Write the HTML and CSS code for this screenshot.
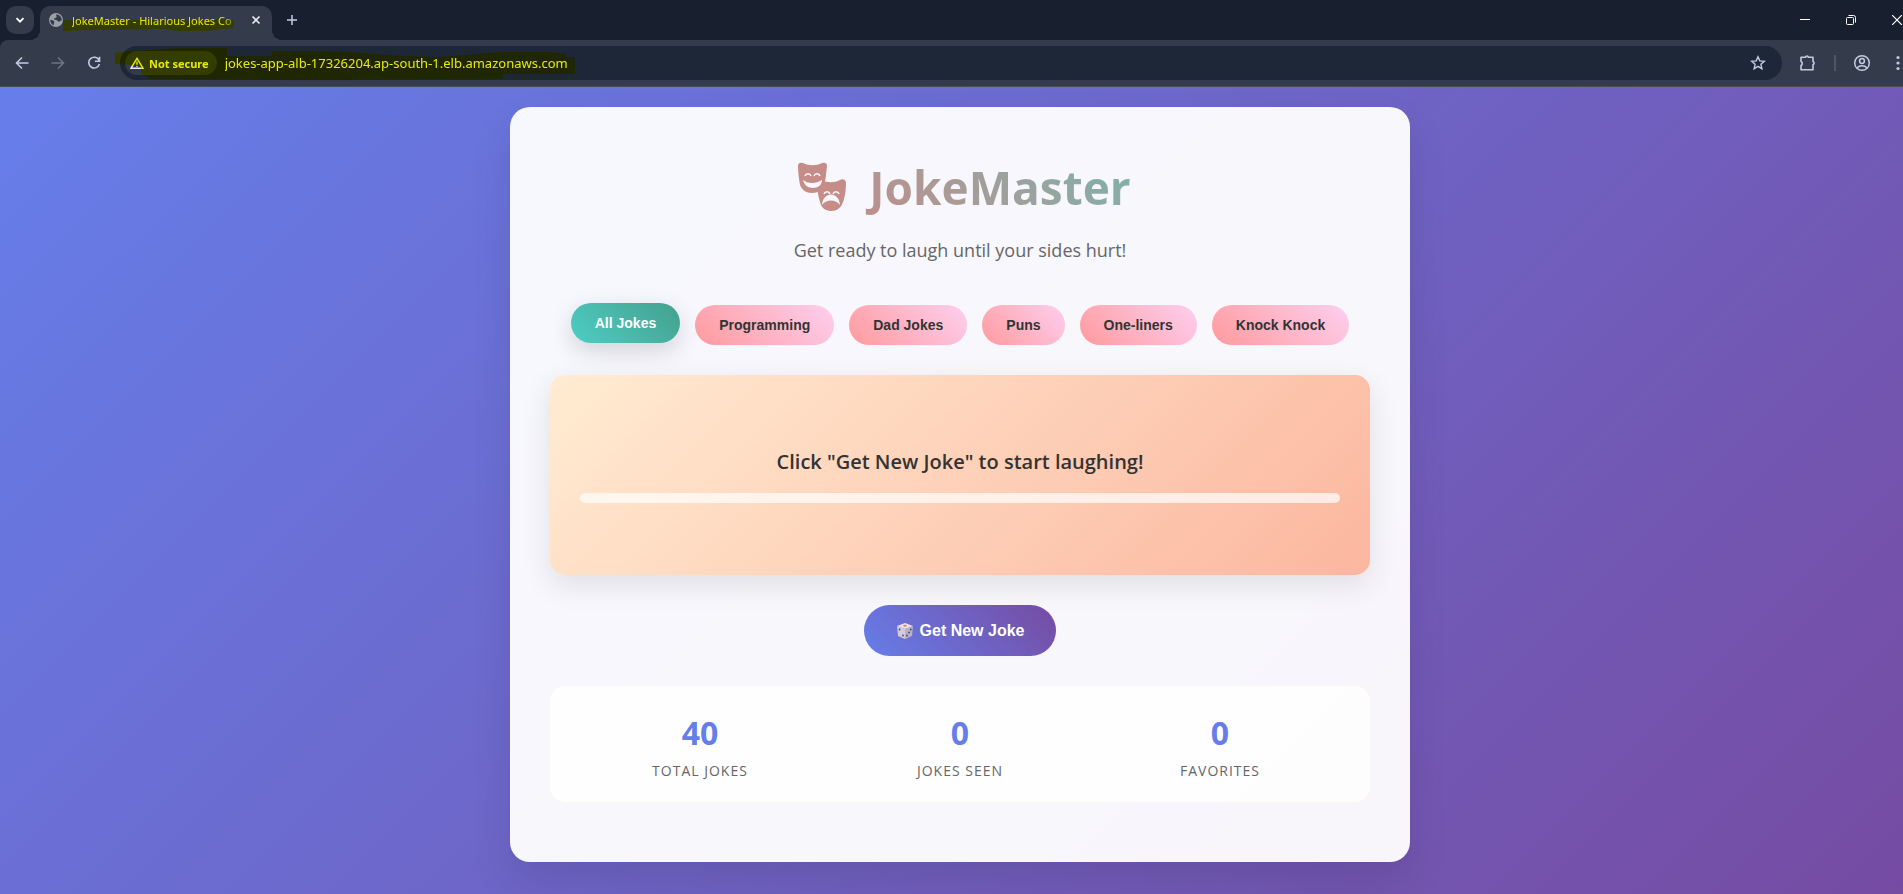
FILE: index.html
```html
<!DOCTYPE html>
<html lang="en">
<head>
<meta charset="utf-8">
<title>JokeMaster - Hilarious Jokes Collection</title>
<link rel="stylesheet" href="styles.css">
</head>
<body>
<div class="window">
  <header class="chrome">
    <div class="tabstrip">
      <button class="tab-search" aria-label="Search tabs"><svg width="12" height="12" viewBox="0 0 12 12"><path d="M2.500 4.200 6 7.700l3.500-3.500" fill="none" stroke="currentColor" stroke-width="1.800"/></svg></button>
      <div class="tab">
        <svg class="globe" width="14" height="14" viewBox="0 0 14 14"><circle cx="7" cy="7" r="7" fill="#9aa0a6"/><path d="M7.500 1.200c-1 1.300.5 1.500 0 2.800-.6 1.200-2.200.8-2.400 2-.2 1 1.300 1 2.600 1.300 1.200.3 1 1.700 2.300 1.500 1-.2 1.200-1.300 2.700-1.300A5.800 5.800 0 0 0 7.500 1.200zM1.200 7c1.500 0 3.800.3 4.100 1.800.2 1.200-.8 1.500-.5 3.500A5.800 5.800 0 0 1 1.200 7z" fill="#333b4b"/></svg>
        <span class="tab-title">JokeMaster - Hilarious Jokes Co</span>
        <button class="icon-btn tab-close" aria-label="Close tab"><svg width="10" height="10" viewBox="0 0 10 10"><path d="m1.500 1.500 7 7m0-7-7 7" stroke="currentColor" stroke-width="1.600"/></svg></button>
      </div>
      <button class="icon-btn new-tab" aria-label="New tab"><svg width="12" height="12" viewBox="0 0 12 12"><path d="M6 1v10M1 6h10" stroke="currentColor" stroke-width="1.500"/></svg></button>
      <div class="window-buttons">
        <button class="icon-btn" aria-label="Minimize"><svg width="10" height="10" viewBox="0 0 10 10"><path d="M0 4.500h10" stroke="currentColor"/></svg></button>
        <button class="icon-btn" aria-label="Restore"><svg width="10" height="10" viewBox="0 0 10 10" fill="none" stroke="currentColor"><rect x=".5" y="2.500" width="7" height="7" rx="1"/><path d="M2.500.5h5a2 2 0 0 1 2 2v5"/></svg></button>
        <button class="icon-btn" aria-label="Close"><svg width="10" height="10" viewBox="0 0 10 10"><path d="m0 0 10 10M10 0 0 10" stroke="currentColor" stroke-width="1.200"/></svg></button>
      </div>
    </div>
    <div class="toolbar">
      <button class="icon-btn" aria-label="Back"><svg width="14" height="14" viewBox="0 0 14 14"><path d="M13.500 7H1.800M7 1.500 1.500 7 7 12.500" fill="none" stroke="currentColor" stroke-width="1.600"/></svg></button>
      <button class="icon-btn dim" aria-label="Forward"><svg width="14" height="14" viewBox="0 0 14 14"><path d="M.5 7h11.700M7 1.500 12.500 7 7 12.500" fill="none" stroke="currentColor" stroke-width="1.600"/></svg></button>
      <button class="icon-btn" aria-label="Reload"><svg width="14" height="14" viewBox="0 0 14 14"><path d="M12 4.200A5.400 5.400 0 1 0 12.400 8M12.500.8v4.400H8" fill="none" stroke="currentColor" stroke-width="1.600"/></svg></button>
      <div class="omnibox">
        <button class="security"><svg width="14" height="12" viewBox="0 0 14 12"><path d="M7 1.300 13 11.300H1z" fill="none" stroke="currentColor" stroke-width="1.400"/><path d="M7 4.500v3.300M7 8.700v1.300" stroke="currentColor" stroke-width="1.400"/></svg>Not secure</button>
        <input class="url" type="text" aria-label="Address" value="jokes-app-alb-17326204.ap-south-1.elb.amazonaws.com">
        <button class="icon-btn star" aria-label="Bookmark this page"><svg width="16" height="16" viewBox="0 0 16 16"><path d="m8 1.800 1.800 4.100 4.500.4-3.400 3 1 4.400L8 11.400l-3.900 2.300 1-4.400-3.400-3 4.500-.4z" fill="none" stroke="currentColor" stroke-width="1.400"/></svg></button>
      </div>
      <button class="icon-btn" aria-label="Extensions"><svg width="18" height="18" viewBox="0 0 18 18"><path d="M2 3.200h4.500a1.600 1.600 0 0 1 3 0H14v4.300a1.700 1.700 0 0 1 0 3.200v5H2v-4.300a2.200 2.200 0 0 0 0-4z" fill="none" stroke="currentColor" stroke-width="1.600" stroke-linejoin="round"/></svg></button>
      <span class="divider"></span>
      <button class="icon-btn" aria-label="Profile"><svg width="18" height="18" viewBox="0 0 18 18" fill="none" stroke="currentColor" stroke-width="1.500"><circle cx="9" cy="9" r="7.300"/><circle cx="9" cy="7" r="2.400"/><path d="M4 14c2.600-2.900 7.400-2.900 10 0"/></svg></button>
      <button class="icon-btn menu" aria-label="Menu"><svg width="4" height="16" viewBox="0 0 4 16" fill="currentColor"><circle cx="2" cy="2.500" r="1.600"/><circle cx="2" cy="8" r="1.600"/><circle cx="2" cy="13.500" r="1.600"/></svg></button>
    </div>
    <svg class="marker" width="600" height="87" viewBox="0 0 600 87" fill="#ff0" aria-hidden="true"><path d="M63 20H234V28L206 31H178L165 29 90 30 63 31z"/><path d="M115 53 128 51 150 50 180 48H227V56H272V51L300 51H320L350 52 385 55 440 57 476 54 500 52H550L566 54V57H575V74H503V79L300 80 150 79 141 73V67L130 65 115 64z"/></svg>
  </header>

  <main class="page">
    <section class="container">
      <header class="intro">
        <h1 class="title">
          <svg class="masks" width="66" height="50" viewBox="0 0 66 50" role="img" aria-label="Theatre masks">
            <g fill="#c68c88">
              <path d="M9 4c0-3 2-4 5-3 6 3 13 3 19 0 3-1 5 0 5 3-1 8-1 13-3 19-2 5-6 8-12 8s-10-3-12-8C10 17 9 11 9 4z"/>
              <path d="M28 20c0-2 2-3 4-2 7 3 13 3 19 0 3-2 6 0 6 3 0 6-1 14-3 19-2 6-6 9-12 9s-10-4-11-9c-2-6-3-13-3-20z"/>
            </g>
            <path d="M14 18c5 4 13 4 19 0 0 5-4 8-9 8s-9-3-10-8z" fill="#f7f8fe"/>
            <path d="M33 43c1-14 17-14 18 0-4-6-14-6-18 0z" fill="#f7f8fe"/>
            <path d="M16 14c1-3 5-3 6 0m3 0c1-3 5-3 6 0M35 32c1-3 5-3 6 0m3 0c1-3 5-3 6 0" fill="none" stroke="#f7f8fe" stroke-width="1.500"/>
          </svg>
          <span>JokeMaster</span>
        </h1>
        <p class="subtitle">Get ready to laugh until your sides hurt!</p>
      </header>
      <nav class="categories">
        <button class="category active">All Jokes</button>
        <button class="category">Programming</button>
        <button class="category">Dad Jokes</button>
        <button class="category">Puns</button>
        <button class="category">One-liners</button>
        <button class="category">Knock Knock</button>
      </nav>
      <article class="joke">
        <p class="joke-text">Click "Get New Joke" to start laughing!</p>
        <div class="punchline"></div>
      </article>
      <button class="new-joke"><svg width="18" height="18" viewBox="0 0 18 18" aria-hidden="true"><path d="m9 1 8 3-8 3-8-3z" fill="#e8e3ec"/><path d="m1 4 8 3v10l-7-3z" fill="#d2ccda"/><path d="m17 4-8 3v10l7-3z" fill="#b9b2c6"/><ellipse cx="9" cy="3.800" rx="1.800" ry="1" fill="#e8707c"/><g fill="#43366b"><ellipse cx="3.500" cy="7.500" rx=".8" ry="1.100"/><ellipse cx="7" cy="13.500" rx=".8" ry="1.100"/><ellipse cx="14.800" cy="7.500" rx=".8" ry="1.100"/><ellipse cx="13" cy="10.500" rx=".8" ry="1.100"/><ellipse cx="11" cy="13.500" rx=".8" ry="1.100"/></g></svg>Get New Joke</button>
      <dl class="stats">
        <div class="stat"><dd class="stat-value">40</dd><dt class="stat-label">Total Jokes</dt></div>
        <div class="stat"><dd class="stat-value">0</dd><dt class="stat-label">Jokes Seen</dt></div>
        <div class="stat"><dd class="stat-value">0</dd><dt class="stat-label">Favorites</dt></div>
      </dl>
    </section>
  </main>
</div>
</body>
</html>
```
FILE: styles.css
```css
* { box-sizing: border-box; margin: 0; padding: 0; }
html, body { height: 100%; }
body { overflow: hidden; font-family: "Open Sans", "Noto Sans", sans-serif; color: #333; }
button, input { border: 0; background: none; font: inherit; color: inherit; }
svg { display: block; flex: none; }

/* The window reaches a little past the right edge of the screen. */
.window { display: flex; flex-direction: column; width: calc(100% + 17px); min-height: 100%; }

.chrome { position: relative; isolation: isolate; background: #18202f; color: #c3cbe0; border-bottom: 1px solid #4a4c50; font-family: "Noto Sans", sans-serif; font-size: 11px; }
.marker { position: absolute; left: 0; top: 0; mix-blend-mode: multiply; pointer-events: none; }
.icon-btn { display: grid; place-items: center; width: 28px; height: 28px; flex: none; }
.dim { color: #6c7484; }

.tabstrip { display: flex; align-items: flex-end; height: 40px; padding-left: 6px; }
.tab-search { display: grid; place-items: center; width: 28px; height: 28px; margin-bottom: 6px; border-radius: 10px; background: #343c4c; color: #fff; }
.tab { position: relative; display: flex; align-items: center; width: 232px; height: 34px; margin-left: 6px; padding: 0 2px 6px 9px; border-radius: 10px 10px 0 0; background: #343c4c; }
.tab::before, .tab::after { content: ""; position: absolute; bottom: 0; width: 10px; height: 10px; }
.tab::before { right: 100%; background: radial-gradient(circle at 0 0, transparent 10px, #343c4c 10px); }
.tab::after { left: 100%; background: radial-gradient(circle at 100% 0, transparent 10px, #343c4c 10px); }
.tab-title { flex: 1; margin-left: 9px; white-space: nowrap; color: #e6e628; -webkit-mask-image: linear-gradient(90deg, #000 88%, transparent); mask-image: linear-gradient(90deg, #000 88%, transparent); }
.tab-close { color: #e6e9f0; }
.new-tab { margin: 0 0 6px 6px; }
.window-buttons { display: flex; gap: 18px; margin: 0 9px 6px auto; color: #fff; }

.toolbar { display: flex; align-items: center; gap: 8px; height: 46px; padding: 0 8px; border-top-left-radius: 8px; background: #343c4c; }
.omnibox { display: flex; align-items: center; flex: 1; height: 34px; margin: 0 4px; padding: 0 10px 0 5px; border-radius: 17px; background: #1e2737; }
.security { display: flex; align-items: center; gap: 5px; height: 24px; padding: 0 8px 0 5px; border-radius: 12px; background: #343c4c; color: #e6e9f0; font-weight: 700; }
.url { flex: 1; min-width: 0; height: 24px; margin-left: 8px; font-size: 13px; color: #e8eaf0; outline: none; }
.divider { width: 2px; height: 16px; margin: 0 4px; background: #4e5667; }

.page { flex: 1; padding: 20px; background: linear-gradient(135deg, #667eea 0%, #764ba2 100%); }
.container { max-width: 900px; margin: 0 auto; padding: 40px 40px 60px; border-radius: 20px; background: rgba(255, 255, 255, .95); box-shadow: 0 20px 40px rgba(0, 0, 0, .1); text-align: center; }

.intro { margin-bottom: 40px; }
.title { display: flex; justify-content: center; align-items: center; gap: 14px; margin-bottom: 8px; font-size: 46px; line-height: 80px; font-weight: 700; background: linear-gradient(45deg, #ff6b6b, #4ecdc4); -webkit-background-clip: text; background-clip: text; color: transparent; }
.subtitle { font-size: 18px; line-height: 30px; color: #666; }

.categories { display: flex; flex-wrap: wrap; justify-content: center; gap: 15px; margin-bottom: 30px; }
.category { height: 40px; padding: 0 24px; border-radius: 20px; background: linear-gradient(45deg, #ff9a9e, #fecfef); font: 700 14px "Liberation Sans", Arial, sans-serif; color: #333; }
.category.active { background: linear-gradient(45deg, #4ecdc4, #44a08d); color: #fff; transform: translateY(-2px); box-shadow: 0 8px 25px rgba(0, 0, 0, .15); }

.joke { display: flex; flex-direction: column; justify-content: center; min-height: 200px; margin-bottom: 30px; padding: 30px; border-radius: 15px; background: linear-gradient(135deg, #ffecd2, #fcb69f); box-shadow: 0 10px 30px rgba(0, 0, 0, .1); }
.joke-text { margin-bottom: 16px; font-size: 20px; line-height: 30px; font-weight: 600; }
.punchline { height: 10px; border-radius: 5px; background: rgba(255, 255, 255, .7); }

.new-joke { display: flex; align-items: center; gap: 6px; height: 51px; margin: 0 auto 30px; padding: 0 32px; border-radius: 26px; background: linear-gradient(45deg, #667eea, #764ba2); color: #fff; font: 700 16px "Liberation Sans", Arial, sans-serif; }

.stats { display: flex; padding: 20px; border-radius: 15px; background: rgba(255, 255, 255, .8); }
.stat { flex: 1; }
.stat-value { font-size: 32px; line-height: 54px; font-weight: 700; color: #667eea; }
.stat-label { font-size: 14px; line-height: 22px; letter-spacing: 1px; text-transform: uppercase; color: #666; }
```
